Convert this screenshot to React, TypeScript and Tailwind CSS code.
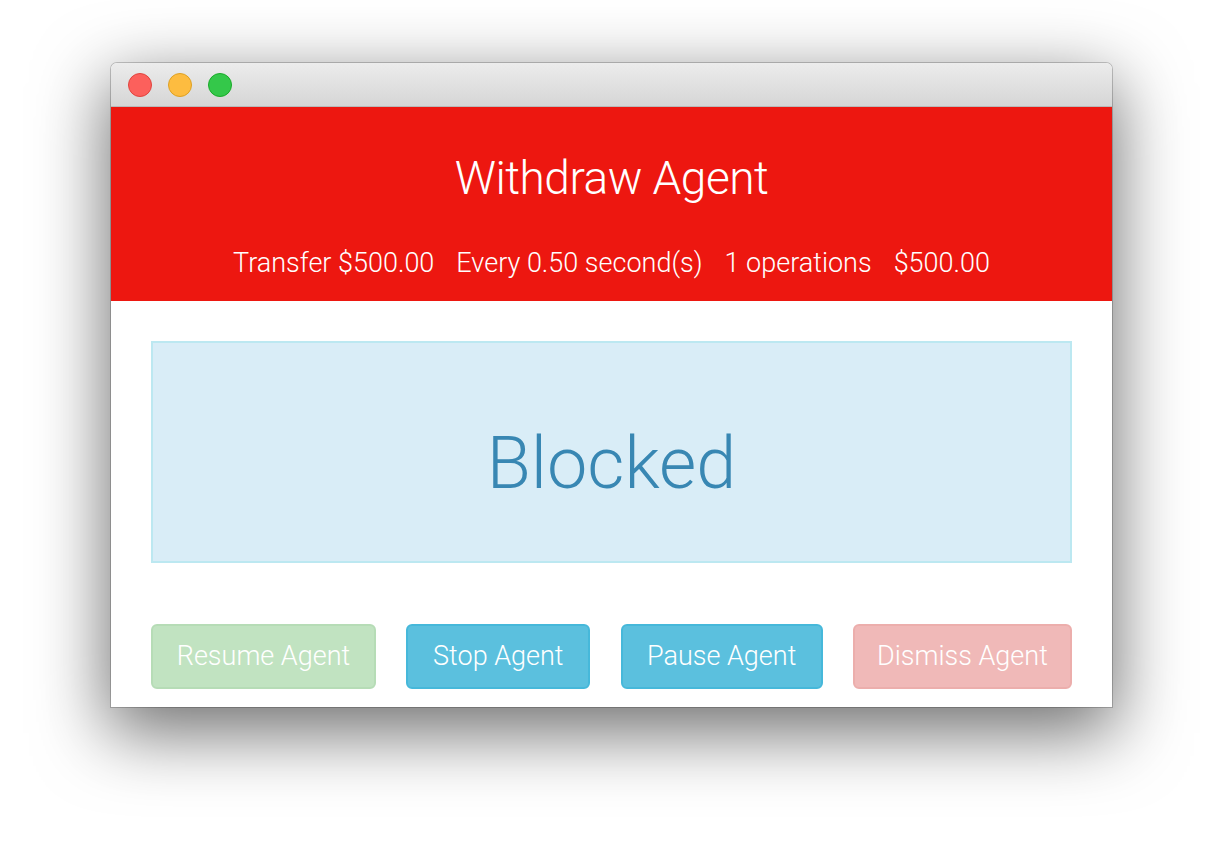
import React from 'react'

const font = { fontFamily: '"Roboto", "Liberation Sans", sans-serif' }

const stats = ['Transfer $500.00', 'Every 0.50 second(s)', '1 operations', '$500.00']

const buttons = [
  { label: 'Resume Agent', cls: 'w-[225px] bg-[#c1e3c1] border-[#b6dcb6]' },
  { label: 'Stop Agent', cls: 'w-[184px] bg-[#5bc0de] border-[#46b8da]' },
  { label: 'Pause Agent', cls: 'w-[202px] bg-[#5bc0de] border-[#46b8da]' },
  { label: 'Dismiss Agent', cls: 'w-[219px] bg-[#f0b9b8] border-[#ecaeac]' },
]

export default function App() {
  return (
    <div className="min-h-[868px] bg-white pt-[63px] pl-[111px]" style={font}>
      <div className="w-[1001px] rounded-t-[6px] overflow-hidden bg-white shadow-[0_22px_70px_4px_rgba(0,0,0,0.56)] ring-1 ring-black/20">
        {/* Title bar */}
        <div className="h-[44px] flex items-center gap-[16px] pl-[17px] bg-gradient-to-b from-[#ececec] to-[#d6d6d6] border-b border-[#b9b9b9]">
          <span className="w-[24px] h-[24px] rounded-full bg-[#fc605c] border border-[#e0443e]" />
          <span className="w-[24px] h-[24px] rounded-full bg-[#fdbc40] border border-[#dea123]" />
          <span className="w-[24px] h-[24px] rounded-full bg-[#34c84a] border border-[#1aab29]" />
        </div>

        {/* Header */}
        <div className="h-[194px] bg-[#ed1710] text-white flex flex-col items-center">
          <h1 className="mt-[48px] text-[46px] font-light leading-none tracking-[-0.5px]">Withdraw Agent</h1>
          <div className="mt-[49px] flex gap-[22px] text-[27px] font-light leading-none">
            {stats.map(s => (
              <span key={s}>{s}</span>
            ))}
          </div>
        </div>

        {/* Body */}
        <div className="px-[40px] pt-[40px] pb-[18px]">
          <div className="h-[222px] pt-[24px] bg-[#d9edf7] border-2 border-[#bce8f1] flex items-center justify-center">
            <span className="text-[72px] font-light text-[#3887b3] leading-none">Blocked</span>
          </div>

          <div className="mt-[61px] flex justify-between">
            {buttons.map(b => (
              <button
                key={b.label}
                className={`h-[65px] rounded-[6px] border-2 text-white text-[27px] font-light ${b.cls}`}
              >
                {b.label}
              </button>
            ))}
          </div>
        </div>
      </div>
    </div>
  )
}
